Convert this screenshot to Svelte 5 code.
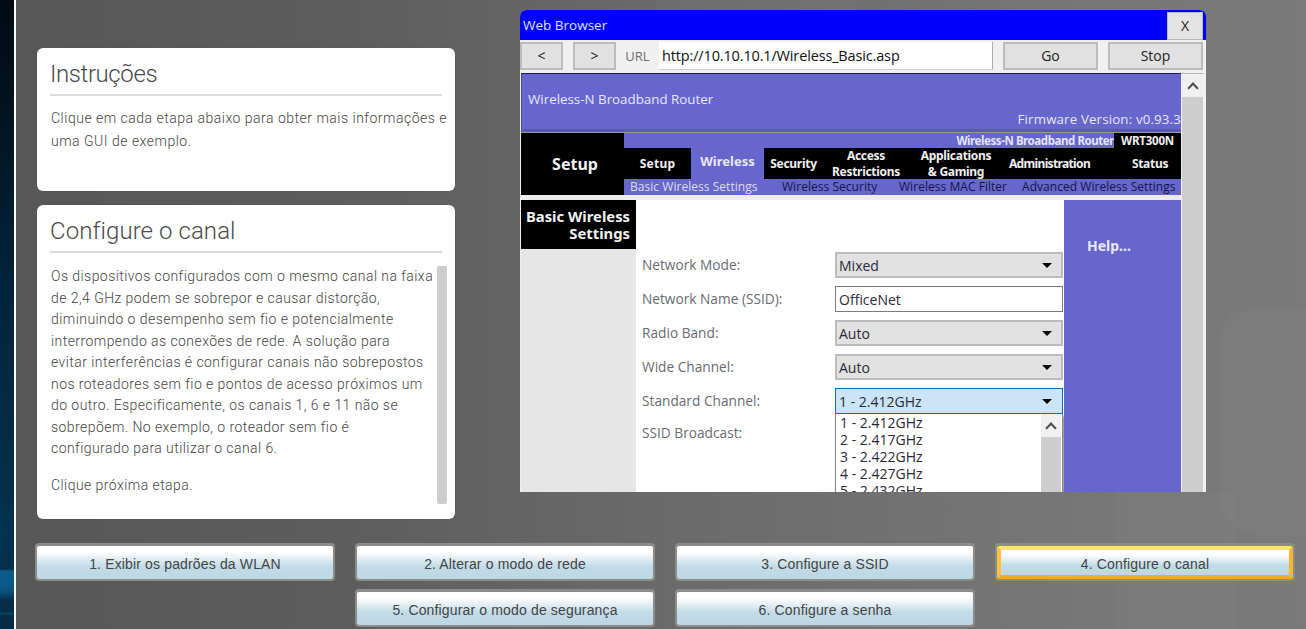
<script>
  const tabs = [
    { label: ['Setup'], w: 67 },
    { label: ['Wireless'], w: 73, active: true },
    { label: ['Security'], w: 59 },
    { label: ['Access', 'Restrictions'], w: 86 },
    { label: ['Applications', '& Gaming'], w: 94 },
    { label: ['Administration'], w: 93 },
    { label: ['Status'], w: 62 }
  ];
  const subs = ['Basic Wireless Settings', 'Wireless Security', 'Wireless MAC Filter', 'Advanced Wireless Settings'];
  const fields = [
    { label: 'Network Mode:', value: 'Mixed' },
    { label: 'Network Name (SSID):', value: 'OfficeNet', input: true },
    { label: 'Radio Band:', value: 'Auto' },
    { label: 'Wide Channel:', value: 'Auto' },
    { label: 'Standard Channel:', value: '1 - 2.412GHz', open: true }
  ];
  const options = ['1 - 2.412GHz', '2 - 2.417GHz', '3 - 2.422GHz', '4 - 2.427GHz', '5 - 2.432GHz'];
  const steps = [
    '1. Exibir os padrões da WLAN',
    '2. Alterar o modo de rede',
    '3. Configure a SSID',
    '4. Configure o canal',
    '5. Configurar o modo de segurança',
    '6. Configure a senha'
  ];
  const lines = [
    'Os dispositivos configurados com o mesmo canal na faixa',
    'de 2,4 GHz podem se sobrepor e causar distorção,',
    'diminuindo o desempenho sem fio e potencialmente',
    'interrompendo as conexões de rede. A solução para',
    'evitar interferências é configurar canais não sobrepostos',
    'nos roteadores sem fio e pontos de acesso próximos um',
    'do outro. Especificamente, os canais 1, 6 e 11 não se',
    'sobrepõem. No exemplo, o roteador sem fio é',
    'configurado para utilizar o canal 6.'
  ];
</script>

<div class="page">
  <div class="strip"></div>
  <main class="main">
    <section class="top">
      <div class="left">
        <article class="card one">
          <h2>Instruções</h2>
          <p>Clique em cada etapa abaixo para obter mais informações e uma GUI de exemplo.</p>
        </article>
        <article class="card two">
          <h2>Configure o canal</h2>
          <div class="scrollwrap">
            <div class="copy">
              <p>{#each lines as l}{l}<br />{/each}</p>
              <p class="next">Clique próxima etapa.</p>
            </div>
            <div class="thumb"></div>
          </div>
        </article>
      </div>

      <div class="browser">
        <div class="title">
          <span>Web Browser</span>
          <div class="close">X</div>
        </div>
        <div class="urlbar">
          <div class="btn nav">&lt;</div>
          <div class="btn nav second">&gt;</div>
          <span class="urllabel">URL</span>
          <div class="url">http://10.10.10.1/Wireless_Basic.asp</div>
          <div class="btn go">Go</div>
          <div class="btn stop">Stop</div>
        </div>
        <div class="viewport">
          <div class="content">
            <div class="banner">
              <span class="bname">Wireless-N Broadband Router</span>
              <span class="fw">Firmware Version: v0.93.3</span>
            </div>
            <div class="navblock">
              <div class="setup">Setup</div>
              <div class="navright">
                <div class="model">
                  <span class="mname">Wireless-N Broadband Router</span>
                  <span class="mcode">WRT300N</span>
                </div>
                <div class="tabs">
                  {#each tabs as t}
                    <div class="tab" class:active={t.active} style="width:{t.w}px">
                      {#each t.label as l}<span>{l}</span>{/each}
                    </div>
                  {/each}
                </div>
                <div class="subs">
                  {#each subs as s, i}
                    <span class:cur={i === 0}>{s}</span>
                  {/each}
                </div>
              </div>
            </div>
            <div class="body">
              <div class="side">
                <div class="sidehead"><span>Basic Wireless</span><span>Settings</span></div>
              </div>
              <div class="form">
                {#each fields as f}
                  <div class="row">
                    <span class="flabel">{f.label}</span>
                    <div class="control" class:input={f.input} class:open={f.open}>
                      <span>{f.value}</span>
                      {#if !f.input}<i class="arrow"></i>{/if}
                    </div>
                  </div>
                {/each}
                <div class="row last">
                  <span class="flabel">SSID Broadcast:</span>
                  <div class="list">
                    <div class="items">
                      {#each options as o}<span>{o}</span>{/each}
                    </div>
                    <div class="listbar">
                      <div class="cap"><i class="chev"></i></div>
                    </div>
                  </div>
                </div>
              </div>
              <div class="help">Help...</div>
            </div>
          </div>
          <div class="vbar">
            <div class="cap"><i class="chev"></i></div>
          </div>
        </div>
      </div>
    </section>

    <nav class="steps">
      {#each steps as s, i}
        <div class="frame" class:sel={i === 3} class:c2={i === 4} class:c3={i === 5}>
          <button class="step">{s}</button>
        </div>
      {/each}
    </nav>
  </main>
</div>

<style>
  :global(body) { margin: 0; background: #666; }
  * { box-sizing: border-box; }
  .page { width: 1306px; height: 629px; display: flex; overflow: hidden; font-family: "Liberation Sans", Arial, sans-serif; }
  .strip {
    width: 16px; flex: none; border-right: 2px solid #fff;
    background:
      linear-gradient(180deg, transparent 0, transparent 612px, rgba(40,120,170,.35) 613px, transparent 616px),
      linear-gradient(180deg, transparent 0, transparent 569px, #0a5c8a 571px, #0a5a88 585px, #0c4f7a 592px, #03304c 600px, transparent 601px),
      linear-gradient(180deg, #010a12 0%, #02233a 45%, #03334f 85%, #042c46 100%);
  }
  .main {
    flex: 1; position: relative; overflow: hidden;
    background:
      linear-gradient(rgba(255,255,255,.02), rgba(255,255,255,.02)) 1100px 492px / 120px 137px no-repeat,
      linear-gradient(rgba(255,255,255,.02), rgba(255,255,255,.02)) 640px 0 / 200px 10px no-repeat,
      linear-gradient(90deg, #575757 0%, #5d5d5d 25%, #6a6a6a 50%, #767676 80%, #7a7a7a 100%);
    padding: 10px 0 0 19px; display: flex; flex-direction: column;
  }
  .main::before {
    content: ""; position: absolute; left: 1204px; top: 310px; width: 110px; height: 225px;
    border-radius: 28px 0 0 40px; background: rgba(255,255,255,.025);
  }
  .top { display: flex; height: 482px; position: relative; }
  .left { width: 422px; padding: 38px 0 0 2px; display: flex; flex-direction: column; gap: 14px; flex: none; height: 511px; }
  .card { background: #fff; border-radius: 6px; box-shadow: 0 0 1px rgba(0,0,0,.4); padding: 11px 8px 0 13px; color: #4c4c4c; width: 418px; }
  .one { height: 143px; }
  .two { height: 314px; }
  h2 { margin: 0; font-family: Roboto, "Liberation Sans", sans-serif; font-weight: 300; font-size: 24px; line-height: 31px; color: #4a4a4a; border-bottom: 2px solid #dcdcdc; height: 37px; width: 392px; }
  .one h2 { letter-spacing: -.4px; }
  .two h2 { letter-spacing: .08px; }
  .card p { margin: 0; font-family: Roboto, "Liberation Sans", sans-serif; font-weight: 300; font-size: 14px; color: #454545; }
  .one p { padding: 11px 0 0 1px; width: 402px; line-height: 23px; letter-spacing: .5px; }
  .scrollwrap { display: flex; justify-content: space-between; padding-top: 13px; width: 397px; }
  .copy { width: 384px; padding-left: 1px; white-space: nowrap; }
  .copy p { line-height: 21.500px; letter-spacing: .44px; }
  .copy .next { margin-top: 15px; }
  .thumb { width: 10px; height: 238px; background: #cdcdcd; border-radius: 2px; }

  .browser { margin-left: 63px; width: 686px; height: 482px; background: #f0f0f0; border-radius: 6px 6px 0 0; overflow: hidden; font-family: "Open Sans", "Noto Sans", sans-serif; display: flex; flex-direction: column; color: #111; flex: none; }
  .title { height: 30px; background: #0000fb; color: #dfe3ff; display: flex; align-items: center; justify-content: space-between; padding: 0 3px 0 3px; font-size: 13.500px; flex: none; }
  .close { width: 36px; height: 28px; margin-top: 1px; background: #e4e4e4; border: 1px solid #b9b9b9; color: #222; display: flex; align-items: center; justify-content: center; font-size: 14px; }
  .urlbar { height: 31px; display: flex; align-items: center; background: #f0f0f0; flex: none; }
  .btn { height: 28px; background: #e1e1e1; border: 2px solid #bcbcbc; display: flex; align-items: center; justify-content: center; font-size: 14px; color: #222; flex: none; }
  .nav { width: 43px; }
  .second { margin-left: 10px; }
  .urllabel { width: 43px; text-align: center; color: #6d6d6d; font-size: 13px; flex: none; }
  .url { width: 334px; height: 28px; background: #fff; font-size: 14.500px; display: flex; align-items: center; padding-left: 3px; border-right: 1px solid #adadad; border-bottom: 1px solid #cfcfcf; letter-spacing: -.15px; white-space: nowrap; flex: none; }
  .go { width: 95px; margin-left: 10px; }
  .stop { width: 95px; margin-left: 10px; }

  .viewport { flex: 1; display: flex; background: #f0f0f0; margin-top: 2px; min-height: 0; padding-left: 1px; }
  .content { width: 660px; overflow: hidden; flex: none; background: #ececec; }
  .banner { height: 59px; background: #6666cc; border-top: 1px solid #1d1d55; border-left: 1px solid #4a4a8f; display: flex; align-items: flex-start; padding: 16px 0 0 6px; color: #e6e6f8; font-size: 13.350px; white-space: nowrap; border-bottom: 3px solid #5a5ab2; overflow: hidden; }
  .bname { flex: 1; }
  .fw { flex: none; margin: 20px 0 0 0; font-size: 13.300px; letter-spacing: .15px; }
  .navblock { display: flex; height: 63px; border-top: 1px solid #9a9a9a; background: #000; }
  .setup { width: 103px; flex: none; color: #f2f2f2; font-family: "Noto Sans", sans-serif; font-weight: 700; font-size: 16px; display: flex; align-items: center; justify-content: center; padding-left: 5px; }
  .navright { flex: 1; display: flex; flex-direction: column; font-family: "Noto Sans", sans-serif; }
  .model { height: 15px; background: #6666cc; display: flex; justify-content: flex-end; font-size: 11.500px; font-weight: 700; color: #e4e4fa; line-height: 15px; }
  .mname { flex: 1; text-align: right; white-space: nowrap; letter-spacing: -.43px; }
  .mcode { width: 67px; flex: none; background: #000; color: #f2f2f2; text-align: center; letter-spacing: -.2px; }
  .tabs { height: 31px; display: flex; background: #000; }
  .tab { display: flex; flex-direction: column; align-items: center; justify-content: center; color: #f0f0f0; font-size: 12px; font-weight: 700; line-height: 15.500px; flex: none; white-space: nowrap; letter-spacing: -.3px; }
  .tab:first-child { letter-spacing: .2px; }
  .tab:nth-child(6) { letter-spacing: -.65px; }
  .tab:last-child { margin-left: auto; letter-spacing: -.3px; }
  .tab.active { background: #6666cc; color: #e8e8fc; font-size: 13px; padding-bottom: 3px; letter-spacing: 0; }
  .subs { height: 16px; background: #6666cc; display: flex; font-size: 12px; line-height: 16px; color: #15154d; padding-left: 6px; white-space: nowrap; font-family: "Open Sans", sans-serif; letter-spacing: .04px; }
  .subs span:nth-child(1) { width: 152px; }
  .subs span:nth-child(2) { width: 117px; }
  .subs span:nth-child(3) { width: 123px; }
  .subs .cur { color: #dcdcf6; }

  .body { display: flex; margin-top: 5px; height: 292px; }
  .side { width: 115px; flex: none; background: #e6e6e6; height: 100%; }
  .sidehead { height: 49px; background: #000; color: #f2f2f2; font-family: "Noto Sans", sans-serif; font-weight: 700; font-size: 14.800px; text-align: right; padding: 8px 6px 0 0; white-space: nowrap; display: flex; flex-direction: column; }
  .sidehead span { display: block; height: 17px; line-height: 17px; }
  .form { width: 428px; flex: none; padding: 52px 0 0 6px; background: #fff; overflow: hidden; font-size: 13.700px; }
  .row { display: flex; height: 34px; }
  .flabel { display: block; width: 193px; flex: none; color: #6a6a72; padding-top: 2px; white-space: nowrap; line-height: 22px; }
  .control { width: 228px; height: 26px; flex: none; background: #e1e1e1; border: 2px solid #bcbcbc; display: flex; align-items: center; justify-content: space-between; padding: 0 9px 0 2px; color: #2a2a3a; font-size: 14px; }
  .control.input { background: #fff; border: 1px solid #7a7a7a; padding-left: 3px; }
  .control.open { background: #cce4f7; border: 1px solid #0c6fb3; padding-left: 3px; padding-right: 10px; }
  .arrow { width: 0; height: 0; border-left: 5px solid transparent; border-right: 5px solid transparent; border-top: 5px solid #000; }
  .row.last { height: auto; }
  .row.last .flabel { padding-top: 0; }
  .list { width: 228px; height: 200px; margin-top: -8px; background: #fff; border-left: 1px solid #8a8a8a; border-right: 1px solid #8a8a8a; display: flex; justify-content: space-between; flex: none; box-shadow: 2px 2px 3px rgba(0,0,20,.45); font-size: 14px; color: #2a2a3a; }
  .items { display: flex; flex-direction: column; padding: 0 0 0 4px; line-height: 17px; }
  .listbar { width: 20px; background: #cdcdcd; margin-right: 1px; }
  .help { flex: 1; background: #6666cc; color: #e8e8fc; font-family: "Noto Sans", sans-serif; font-weight: 700; font-size: 14px; padding: 36px 0 0 23px; }

  .vbar { width: 22px; margin-left: 1px; background: #cdcdcd; flex: none; border-right: 1px solid #f4f4f4; border-top: 1px solid #b4b4b4; }
  .cap { height: 23px; background: #f0f0f0; display: flex; align-items: center; justify-content: center; }
  .chev { display: block; flex: none; width: 8px; height: 8px; margin-top: 5px; border-top: 2px solid #4c4c4c; border-left: 2px solid #4c4c4c; transform: rotate(45deg); }

  .steps { display: grid; grid-template-columns: repeat(4, 300px); gap: 8px 20px; margin-top: 51px; position: relative; }
  .frame { height: 38px; }
  .c2 { grid-column: 2; }
  .c3 { grid-column: 3; }
  .step { width: 100%; height: 38px; padding: 3px 0 0; border: 2px solid #8c8c8c; border-top-width: 3px; border-radius: 4px; background-clip: padding-box; font-family: "Liberation Sans", Arial, sans-serif; font-size: 14px; letter-spacing: .15px; color: #444; background-color: #bdd7e5; background-image: linear-gradient(180deg, #fff 0%, #fff 18%, #c2dbe8 62%, #bdd7e5 100%); display: block; }
  .sel { padding: 3px 2px 2px; background: #8c8c8c; border-radius: 4px; }
  .sel .step { height: 33px; padding: 3px 0 0; border-width: 4px; border-style: solid; border-color: #ffe866 #ffb52e #ffa828 #ffc23a; border-radius: 3px; }
</style>
